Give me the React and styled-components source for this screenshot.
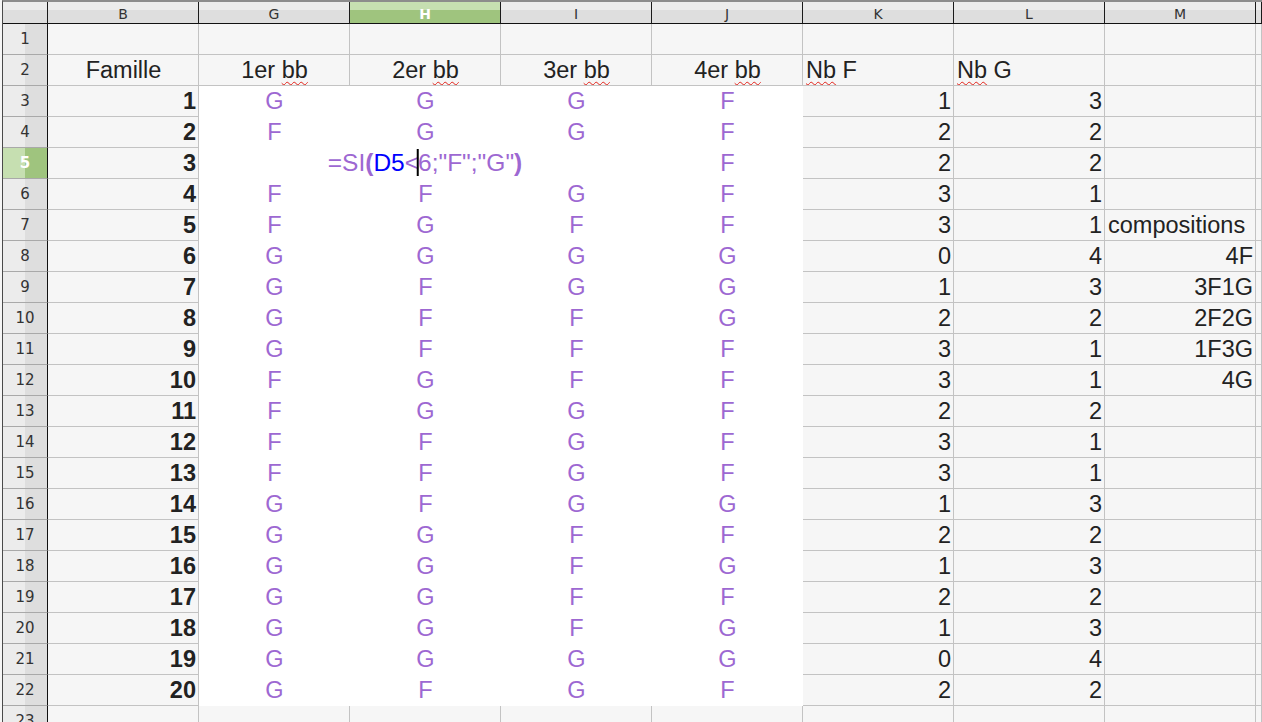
import React from "react";
import styled, { createGlobalStyle, css } from "styled-components";

const GlobalStyle = createGlobalStyle`
  html, body {
    margin: 0;
    padding: 0;
    background: #f6f6f6;
    overflow: hidden;
  }
`;

const PURPLE = "#9d68d2";
const COLS = ["B", "G", "H", "I", "J", "K", "L", "M", ""];

const rows = [
  ["G", "G", "G", "F", 1, 3, ""],
  ["F", "G", "G", "F", 2, 2, ""],
  ["", "=", "", "F", 2, 2, ""],
  ["F", "F", "G", "F", 3, 1, ""],
  ["F", "G", "F", "F", 3, 1, "compositions"],
  ["G", "G", "G", "G", 0, 4, "4F"],
  ["G", "F", "G", "G", 1, 3, "3F1G"],
  ["G", "F", "F", "G", 2, 2, "2F2G"],
  ["G", "F", "F", "F", 3, 1, "1F3G"],
  ["F", "G", "F", "F", 3, 1, "4G"],
  ["F", "G", "G", "F", 2, 2, ""],
  ["F", "F", "G", "F", 3, 1, ""],
  ["F", "F", "G", "F", 3, 1, ""],
  ["G", "F", "G", "G", 1, 3, ""],
  ["G", "G", "F", "F", 2, 2, ""],
  ["G", "G", "F", "G", 1, 3, ""],
  ["G", "G", "F", "F", 2, 2, ""],
  ["G", "G", "F", "G", 1, 3, ""],
  ["G", "G", "G", "G", 0, 4, ""],
  ["G", "F", "G", "F", 2, 2, ""],
];

const Frame = styled.div`
  margin-left: 2px;
  border-left: 1px solid #4a4a4a;
  border-top: 2px solid #8c8c8c;
  height: 720px;
  overflow: hidden;
`;

const Grid = styled.div`
  display: grid;
  grid-template-columns: 45px repeat(8, 151px) 1fr;
  grid-template-rows: 22px repeat(23, 31px);
`;

const headerBase = css`
  box-sizing: border-box;
  font-family: "DejaVu Sans", sans-serif;
  font-size: 14px;
  color: #333;
  display: flex;
  align-items: center;
  justify-content: center;
`;

const ColHead = styled.div`
  ${headerBase}
  border-right: 1px solid #1a1a1a;
  border-bottom: 1px solid #111;
  background: ${(p) =>
    p.$active
      ? "linear-gradient(to bottom, #c6dfb1 0 40%, #9fc47e 40%)"
      : "linear-gradient(to bottom, #ececec 0 40%, #dedede 40%)"};
  color: ${(p) => (p.$active ? "#fff" : "#333")};
  font-weight: ${(p) => (p.$active ? "bold" : "normal")};
  padding-top: 2px;
`;

const RowHead = styled.div`
  ${headerBase}
  font-size: 15px;
  border-right: 1px solid #111;
  border-bottom: 1px solid #a9a9a9;
  background: ${(p) =>
    p.$active
      ? "linear-gradient(to right, #c6dfb1 0 50%, #9fc47e 50%)"
      : "linear-gradient(to right, #ececec 0 50%, #dedede 50%)"};
  color: ${(p) => (p.$active ? "#fff" : "#333")};
  font-weight: ${(p) => (p.$active ? "bold" : "normal")};
`;

const Cell = styled.div`
  box-sizing: border-box;
  position: relative;
  font-family: "Liberation Sans", Arial, sans-serif;
  font-size: 23.5px;
  line-height: 30px;
  white-space: nowrap;
  color: ${(p) => p.$color || "#222"};
  font-weight: ${(p) => (p.$bold ? "bold" : "normal")};
  text-align: ${(p) => p.$align || "left"};
  padding: 0 2px 0 3px;
  background: ${(p) => (p.$white ? "#fff" : "#f6f6f6")};
  border-right: 1px solid ${(p) => (p.$white ? "#fff" : "#c3c3c3")};
  border-bottom: 1px solid ${(p) => (p.$white ? "#fff" : "#c3c3c3")};
  overflow: ${(p) => (p.$overflow ? "visible" : "hidden")};
  z-index: ${(p) => (p.$overflow ? 2 : 1)};
`;

const Spell = styled.span`
  text-decoration: underline wavy #e2231a;
  text-decoration-thickness: 1.3px;
  text-underline-offset: 3px;
  text-decoration-skip-ink: none;
`;

const Formula = styled.span`
  position: absolute;
  left: 50%;
  top: 0;
  transform: translateX(-50%);
  font-size: 24.5px;
  color: ${PURPLE};
`;

const Paren = styled.span`
  font-weight: bold;
`;

const Ref = styled.span`
  color: #0000ff;
`;

const Caret = styled.span`
  display: inline-block;
  width: 2px;
  height: 27px;
  margin: 0 -1px 0 -2px;
  background: #000;
  vertical-align: -5px;
`;

function FormulaText() {
  return (
    <Formula>
      =SI<Paren>(</Paren>
      <Ref>D5</Ref>&lt;<Caret />6;"F";"G"<Paren>)</Paren>
    </Formula>
  );
}

export default function App() {
  return (
    <>
      <GlobalStyle />
      <Frame>
        <Grid>
          <ColHead />
          {COLS.map((c, i) => (
            <ColHead key={i} $active={c === "H"}>
              {c}
            </ColHead>
          ))}

          <RowHead>1</RowHead>
          {COLS.map((c, i) => (
            <Cell key={i} />
          ))}

          <RowHead>2</RowHead>
          <Cell $align="center">Famille</Cell>
          {["1er", "2er", "3er", "4er"].map((t) => (
            <Cell key={t} $align="center">
              {t} <Spell>bb</Spell>
            </Cell>
          ))}
          <Cell>
            <Spell>Nb</Spell> F
          </Cell>
          <Cell>
            <Spell>Nb</Spell> G
          </Cell>
          <Cell />
          <Cell />

          {rows.map((r, i) => {
            const n = i + 3;
            return (
              <React.Fragment key={n}>
                <RowHead $active={n === 5}>{n}</RowHead>
                <Cell $align="right" $bold>
                  {i + 1}
                </Cell>
                {r.slice(0, 4).map((v, j) =>
                  v === "=" ? (
                    <Cell key={j} $white $overflow>
                      <FormulaText />
                    </Cell>
                  ) : (
                    <Cell key={j} $white $align="center" $color={PURPLE}>
                      {v}
                    </Cell>
                  )
                )}
                <Cell $align="right">{r[4]}</Cell>
                <Cell $align="right">{r[5]}</Cell>
                <Cell $align={r[6] === "compositions" ? "left" : "right"}>
                  {r[6]}
                </Cell>
                <Cell />
              </React.Fragment>
            );
          })}

          <RowHead>23</RowHead>
          {COLS.map((c, i) => (
            <Cell key={i} />
          ))}
        </Grid>
      </Frame>
    </>
  );
}
